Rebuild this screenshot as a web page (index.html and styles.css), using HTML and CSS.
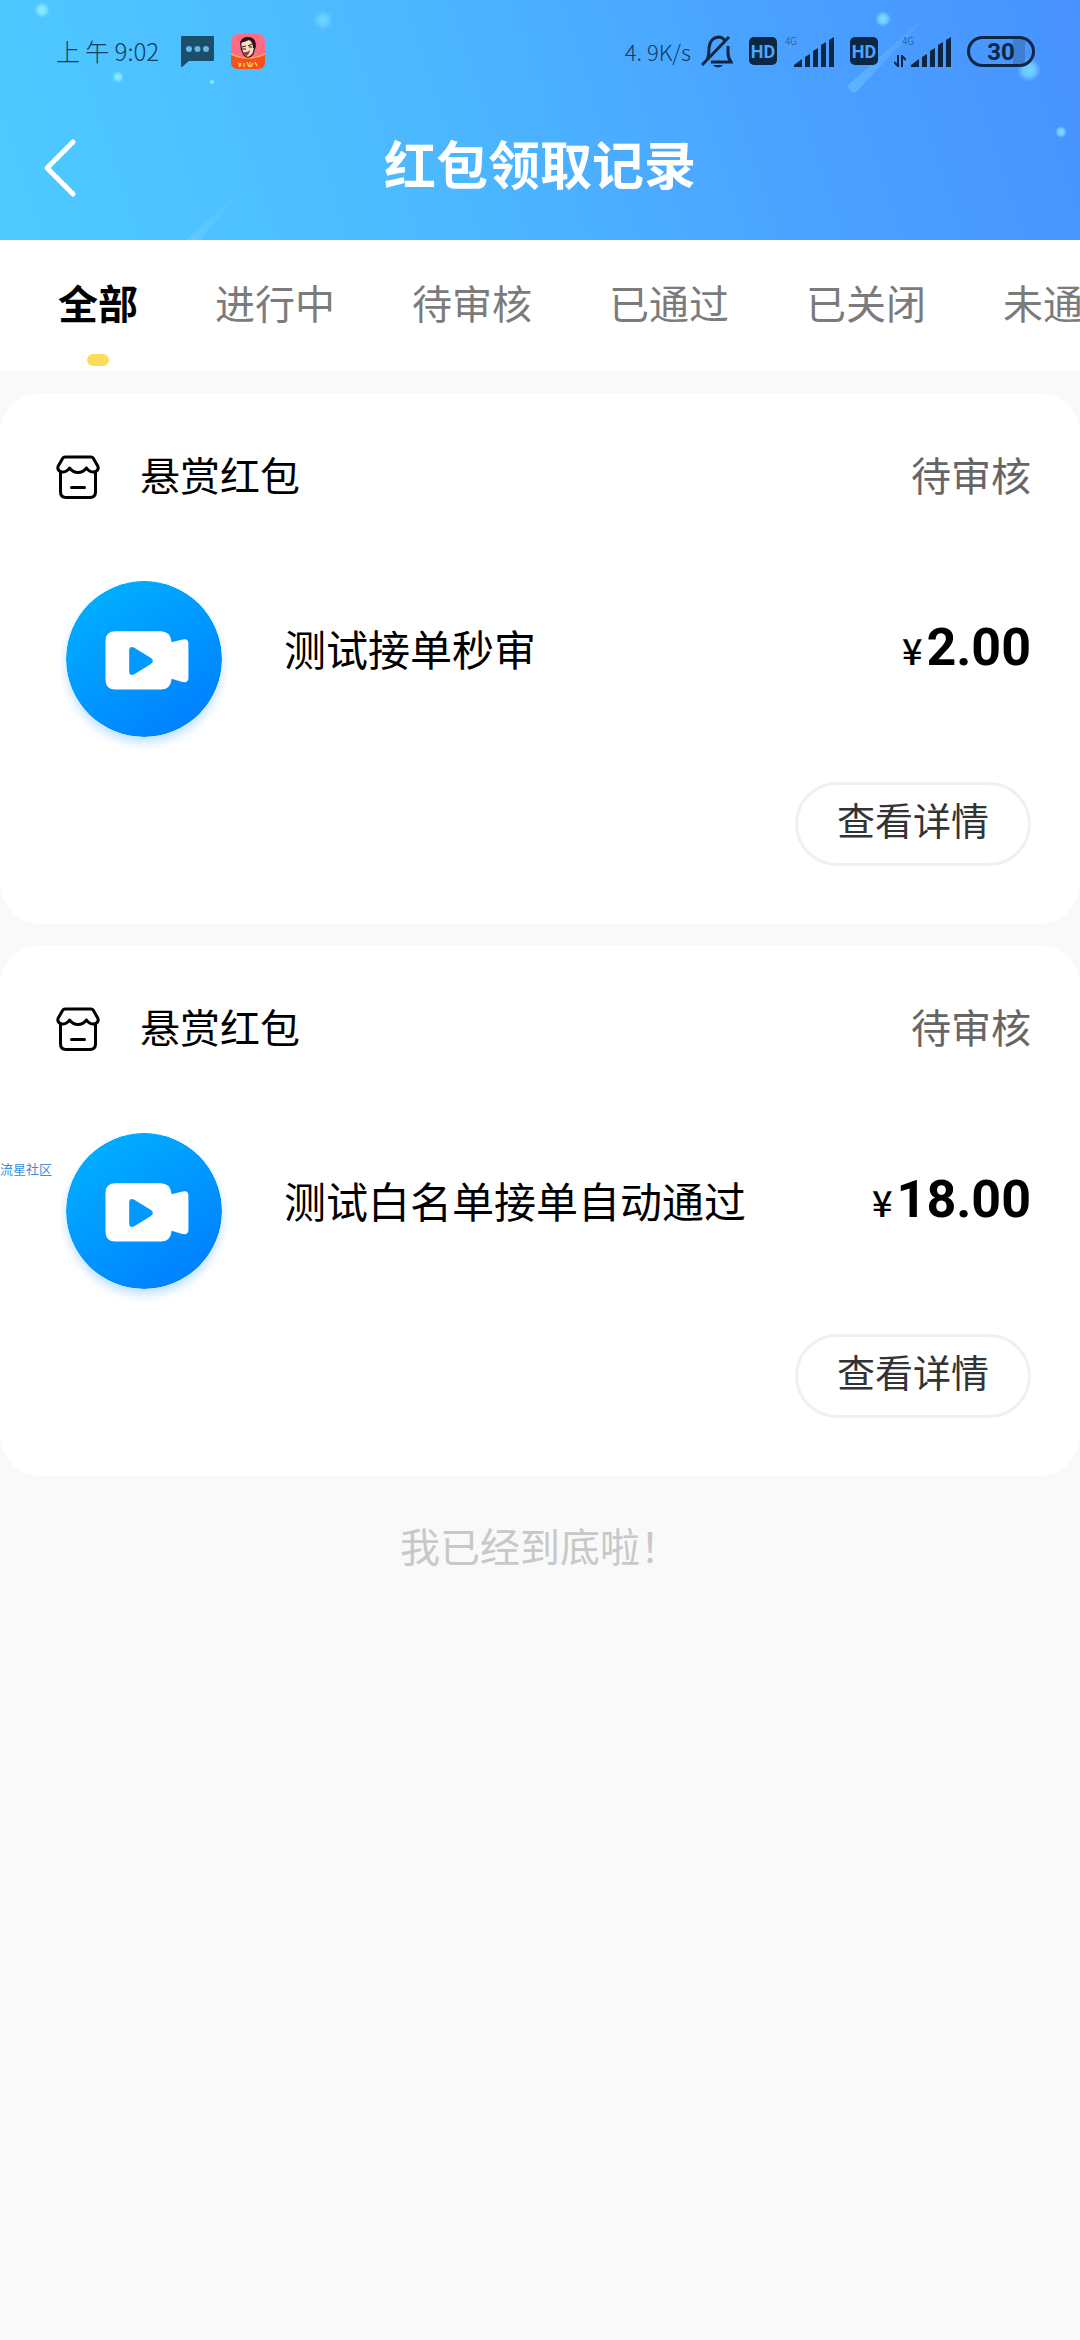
FILE: index.html
```html
<!DOCTYPE html>
<html lang="zh-CN">
<head>
<meta charset="utf-8">
<meta name="viewport" content="width=device-width">
<title>红包领取记录</title>
<link rel="stylesheet" href="styles.css">
</head>
<body>
<svg class="defs" aria-hidden="true">
  <defs>
    <linearGradient id="disc" x1="0.15" y1="0" x2="0.85" y2="1">
      <stop offset="0" stop-color="#00b2ff"/><stop offset="1" stop-color="#007dff"/>
    </linearGradient>
    <symbol id="bars" viewBox="0 0 40 30">
      <path d="M0 30v-2l8-6v8zM11 20l5-3v13h-5zM19 14l5-3v19h-5zM27 8l5-3v25h-5zM35 3l5-3v30h-5z" fill="#0c2744"/>
    </symbol>
    <symbol id="shop" viewBox="0 0 44 44">
      <g fill="none" stroke="#000" stroke-width="3" stroke-linejoin="round" stroke-linecap="round">
        <path d="M9 2h26q1.500 0 2.300 1.300L42 11.500q1 4-3.500 5.500-5 .5-8-4-3.500 4.500-8.500 4.500T13.500 13q-3 4.500-8 4Q1 15.500 2 11.500l4.700-8.200Q7.500 2 9 2z"/>
        <path d="M4.500 17v20q0 5.500 5.500 5.500h24q5.500 0 5.500-5.500V17M15.500 32.500h13"/>
      </g>
    </symbol>
    <symbol id="video" viewBox="0 0 158 158">
      <circle cx="79" cy="79" r="79" fill="url(#disc)"/>
      <path d="M50 51h46q10 0 11 11l10-2.500q7-2 7 4V98q0 6-7 4l-10-3q-1 11-11 11H50q-10 0-10-10V61q0-10 10-10z" fill="#fff"/>
      <path d="M64 71v20q0 6.500 6 3l16-10q4-3 0-6L70 68q-6-3.500-6 3z" fill="#0099ff"/>
    </symbol>
  </defs>
</svg>

<header class="header">
  <svg class="sky" viewBox="0 0 1080 240" preserveAspectRatio="none" aria-hidden="true">
    <defs>
      <linearGradient id="t1" x1="1" y1="0" x2="0" y2="1"><stop offset="0" stop-color="#7fd4ff" stop-opacity="0"/><stop offset="1" stop-color="#7fd4ff" stop-opacity=".4"/></linearGradient>
      <radialGradient id="dot"><stop offset="0" stop-color="#86f0ff"/><stop offset=".5" stop-color="#86e8ff" stop-opacity=".85"/><stop offset="1" stop-color="#7fdcff" stop-opacity="0"/></radialGradient>
    </defs>
    <path d="M186 240L246 186 200 240z" fill="url(#t1)"/>
    <path d="M848 85L935 8 856 92q-7 2-8-7z" fill="url(#t1)"/>
    <g fill="url(#dot)">
      <circle cx="42" cy="10" r="8"/><circle cx="118" cy="77" r="6"/><circle cx="212" cy="82" r="3"/>
      <circle cx="323" cy="20" r="10" opacity=".5"/><circle cx="883" cy="19" r="8" opacity=".8"/>
      <circle cx="1029" cy="70" r="12" opacity=".7"/><circle cx="1061" cy="132" r="6" opacity=".8"/>
    </g>
  </svg>

  <div class="status">
    <span class="clock">上 午 9:02</span>
    <svg class="bubble" width="33" height="31" viewBox="0 0 33 31"><path d="M1 0h31q1 0 1 1v23q0 1-1 1H8l-7 6q-1 0-1-1V1q0-1 1-1z" fill="#1c4e6b"/><g fill="#61b9e8"><circle cx="8" cy="13" r="3"/><circle cx="16.500" cy="13" r="3"/><circle cx="25" cy="13" r="3"/></g></svg>
    <svg class="app" width="34" height="35" viewBox="0 0 34 35">
      <rect width="34" height="35" rx="7" fill="#ff6b86"/>
      <path d="M0 20q17 8 34 0v8q0 7-7 7H7q-7 0-7-7z" fill="#f4511e"/>
      <path d="M0 20q17 8 34 0" fill="none" stroke="#ffc043" stroke-width="1.200"/>
      <path d="M10 8q2-5 8-4 7 0 6 9l-2 7q-5 6-9 1-4-6-3-13z" fill="#fbdcc0" stroke="#2a1214" stroke-width="1.200"/>
      <path d="M9 9q2-7 9-6 8 1 6 12l-2-1q0-6-4-8-4 2-9 3z" fill="#2a1214"/>
      <path d="M11 13l4-1m2 0l4-2M11 15h4m3-2h3" stroke="#2a1214" fill="none"/>
      <path d="M12 18q4 1 7-2-1 6-5 6z" fill="#b1303a"/>
      <path d="M7 29l3 3m0-3l-2 4m5-4v4m3-5l2 5m1-5v5m3-4l-2 4m4-5l2 4" stroke="#ffd25a" stroke-width="1.300" fill="none"/>
    </svg>
    <span class="speed">4. 9K/s</span>
    <svg class="bell" width="32" height="33" viewBox="0 0 32 33"><g fill="none" stroke="#0c2744" stroke-width="3"><path d="M6 25q2-4 2-12Q9 3 17 2q5 0 7 4M27 11v7q0 5 3 9H10M1 30L28 2"/></g><path d="M12 30h10q-5 5-10 0z" fill="#0c2744"/></svg>
    <span class="hd">HD</span>
    <span class="signal"><span class="net">4G</span><svg width="40" height="30"><use href="#bars"/></svg></span>
    <span class="hd">HD</span>
    <span class="signal data">
      <svg width="12" height="12" viewBox="0 0 12 12"><path d="M4 0v11L0 7M8 12V1l4 4" fill="none" stroke="#0c2744" stroke-width="2"/></svg>
      <span class="net">4G</span><svg width="40" height="30"><use href="#bars"/></svg>
    </span>
    <span class="battery">30</span>
  </div>

  <div class="titlebar">
    <button class="back" type="button" aria-label="返回"><svg width="34" height="60" viewBox="0 0 34 60"><path d="M30 4L4 30l26 26" fill="none" stroke="#fff" stroke-width="5" stroke-linecap="round" stroke-linejoin="round"/></svg></button>
    <h1>红包领取记录</h1>
  </div>
</header>

<nav class="tabs">
  <button class="tab active" type="button">全部</button>
  <button class="tab" type="button">进行中</button>
  <button class="tab" type="button">待审核</button>
  <button class="tab" type="button">已通过</button>
  <button class="tab" type="button">已关闭</button>
  <button class="tab" type="button">未通过</button>
</nav>

<main class="list">
  <article class="card">
    <div class="card-head">
      <svg class="shop" width="44" height="44"><use href="#shop"/></svg>
      <h2>悬赏红包</h2>
      <span class="state">待审核</span>
    </div>
    <div class="card-body">
      <svg class="video" width="156" height="156"><use href="#video"/></svg>
      <p class="name">测试接单秒审</p>
      <p class="price"><span class="yen">¥</span>2.00</p>
    </div>
    <button class="detail" type="button">查看详情</button>
  </article>

  <article class="card">
    <span class="mark">流星社区</span>
    <div class="card-head">
      <svg class="shop" width="44" height="44"><use href="#shop"/></svg>
      <h2>悬赏红包</h2>
      <span class="state">待审核</span>
    </div>
    <div class="card-body">
      <svg class="video" width="156" height="156"><use href="#video"/></svg>
      <p class="name">测试白名单接单自动通过</p>
      <p class="price"><span class="yen">¥</span>18.00</p>
    </div>
    <button class="detail" type="button">查看详情</button>
  </article>
  <p class="end">我已经到底啦！</p>
</main>
</body>
</html>
```
FILE: styles.css
```css
* {
  box-sizing: border-box;
}

body {
  margin: 0;
  min-height: 100vh;
  background: #f9f9f9;
  color: #000;
  font-family: Roboto, "Noto Sans CJK SC", sans-serif;
  font-size: 40px;
  line-height: 60px;
  overflow-x: hidden;
}

h1, h2, p {
  margin: 0;
  font-weight: 400;
  font-size: inherit;
}

button {
  margin: 0;
  padding: 0;
  border: 0;
  background: none;
  color: inherit;
  font: inherit;
}

svg {
  display: block;
  flex: none;
}

.defs {
  position: absolute;
  width: 0;
  height: 0;
}

/* header */
.header {
  position: relative;
  padding-top: 31px;
  padding-bottom: 39px;
  background: linear-gradient(72deg, #4ecbff 0%, #4cb8ff 40%, #4aa0ff 74%, #4892ff 100%);
}

.sky {
  position: absolute;
  inset: 0;
  width: 100%;
  height: 100%;
}

.status {
  position: relative;
  display: flex;
  align-items: center;
  height: 40px;
  padding: 0 45px 0 56px;
  color: #103b61;
  font-family: "Noto Sans CJK SC", sans-serif;
  font-size: 24px;
  font-weight: 300;
  line-height: 40px;
}

.bubble {
  margin-left: 22px;
}

.app {
  margin-left: 17px;
}

.speed {
  margin-left: auto;
  font-size: 22px;
}

.bell {
  margin-left: 10px;
}

.hd {
  width: 28px;
  height: 28px;
  margin-left: 16px;
  border-radius: 5px;
  background: #0c2744;
  color: #4da6ff;
  font-family: Roboto, sans-serif;
  font-size: 18px;
  font-weight: 700;
  line-height: 30px;
  text-align: center;
}

.signal {
  display: flex;
  align-items: flex-end;
  height: 32px;
  margin-left: 8px;
}

.net {
  align-self: flex-start;
  width: 9px;
  color: #1d4f85;
  font-size: 10px;
  line-height: 12px;
}

.data {
  margin-left: 16px;
}

.data .net {
  width: 5px;
  margin-left: -4px;
  margin-right: 4px;
}

.battery {
  width: 68px;
  height: 31px;
  margin-left: 16px;
  border: 3px solid #0c2744;
  border-radius: 16px;
  background: linear-gradient(90deg, transparent 70%, #3f7fd0 70%, #3f7fd0 88%, transparent 88%);
  color: #0c2744;
  font-family: Roboto, sans-serif;
  font-size: 24px;
  font-weight: 700;
  line-height: 27px;
  text-align: center;
}

.titlebar {
  position: relative;
  display: grid;
  grid-template-columns: 80px 1fr 80px;
  align-items: center;
  margin-top: 64px;
}

.back {
  display: flex;
  padding-left: 43px;
}

h1 {
  color: #fff;
  font-size: 52px;
  font-weight: 700;
  line-height: 66px;
  text-align: center;
}

/* tabs */
.tabs {
  display: flex;
  gap: 77px;
  height: 131px;
  padding: 36px 0 5px 58px;
  overflow: hidden;
  background: #fff;
}

.tab {
  display: flex;
  flex: none;
  flex-direction: column;
  align-items: center;
  justify-content: space-between;
  color: #7b7b7b;
  white-space: nowrap;
}

.active {
  color: #000;
  font-weight: 700;
}

.active::after {
  width: 22px;
  height: 12px;
  border-radius: 6px;
  background: #fddc5c;
  content: "";
}

/* records */
.list {
  display: flex;
  flex-direction: column;
  gap: 21px;
  padding-top: 22px;
}

.card {
  position: relative;
  display: flex;
  flex-direction: column;
  padding: 54px 49px 58px 56px;
  border-radius: 40px;
  background: #fff;
}

.card-head {
  display: flex;
  align-items: center;
}

.card-head h2 {
  margin-left: 40px;
  padding-top: 2px;
  line-height: 58px;
}

.state {
  margin-left: auto;
  padding-top: 2px;
  color: #666;
  line-height: 58px;
}

.card-body {
  display: flex;
  align-items: flex-start;
  margin-top: 74px;
  padding-left: 10px;
}

.video {
  border-radius: 50%;
  box-shadow: 0 6px 10px #c3e2ff;
}

.name {
  flex: 1;
  margin-left: 62px;
  padding-top: 41px;
  font-size: 42px;
}

.price {
  padding-top: 37px;
  font-size: 52px;
  font-weight: 700;
}

.yen {
  margin-right: 4px;
  font-family: "Noto Sans CJK SC", sans-serif;
  font-size: 36px;
  font-weight: 500;
  line-height: 36px;
}

.detail {
  align-self: flex-end;
  width: 236px;
  height: 84px;
  margin-top: 45px;
  padding-bottom: 4px;
  border: 3px solid #f0f0f0;
  border-radius: 42px;
  color: #333;
  font-size: 38px;
}

.mark {
  position: absolute;
  top: 215px;
  left: 0;
  color: #3a8ee0;
  font-size: 13px;
  line-height: 20px;
}

.end {
  margin-top: 22px;
  color: #c8c8c8;
  text-align: center;
}
```
